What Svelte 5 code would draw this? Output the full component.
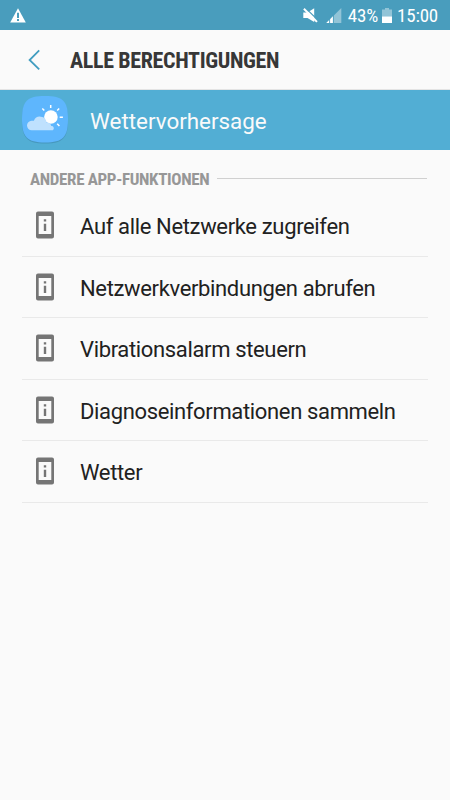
<script lang="ts">
    let appName = 'Wettervorhersage';

    let permissions = [
        'Auf alle Netzwerke zugreifen',
        'Netzwerkverbindungen abrufen',
        'Vibrationsalarm steuern',
        'Diagnoseinformationen sammeln',
        'Wetter'
    ];
</script>

<div class="screen">
    <div class="status-bar">
        <svg class="warning" width="16" height="15" viewBox="0 0 16 15">
            <path d="M8 0.3 15.8 14.6H0.2Z" fill="#fff" />
            <path d="M7 4.7h2v5.3H7zM7 11h2v2H7z" fill="#499dbd" />
        </svg>
        <div class="status-right">
            <svg class="mute" width="15" height="15" viewBox="0 0 15 15">
                <path d="M0.3 4.4h4.2L11.2 0.2v13.9L4.5 10H0.3z" fill="#fff" />
                <path d="M2.4 0 15.4 12.5" stroke="#499dbd" stroke-width="1.2" />
                <path d="M0.9 0.8 14 13.9" stroke="#fff" stroke-width="2" />
            </svg>
            <svg class="signal" width="16" height="15" viewBox="0 0 16 15">
                <path d="M15.3 0v15H0.3z" fill="#92c4d7" />
                <path d="M7 8.3V15H0.3z" fill="#fff" />
                <path d="M3.6 8v7M7.4 6v9" stroke="#499dbd" stroke-width="0.9" />
            </svg>
            <span class="status-text percent">43%</span>
            <svg class="battery" width="10" height="15" viewBox="0 0 10 15">
                <path d="M3 0h4v1.5h3v6.9H0V1.5h3z" fill="#92c4d7" />
                <path d="M0 8.4h10V15H0z" fill="#fff" />
            </svg>
            <span class="status-text clock">15:00</span>
        </div>
    </div>

    <header>
        <svg width="13" height="22" viewBox="0 0 13 22">
            <path d="M11.2 1.4 1.6 11l9.6 9.3" fill="none" stroke="#419dc0" stroke-width="1.8" />
        </svg>
        <h1>ALLE BERECHTIGUNGEN</h1>
    </header>

    <div class="app-row">
        <svg class="app-icon" width="48" height="50" viewBox="0 0 48 50">
            <path d="M24 2.2C42 2.2 47 7 47 25S42 48.6 24 48.6 1 43 1 25 6 2.2 24 2.2Z" fill="#438fb5" opacity=".7" />
            <path d="M24 1C42 1 47 6 47 24S42 47.5 24 47.5 1 42 1 24 6 1 24 1Z" fill="#5eb6fd" />
            <path d="M29.7 10v3M21.3 13.5l2 2M38.2 13.5l-2 2M38.7 22.3h3.2M36.2 28.8l2.2 2.2" stroke="#fff" stroke-width="1.5" />
            <circle cx="29.9" cy="22" r="6.8" fill="#fff" />
            <path d="M10.8 35.2a4.7 4.7 0 0 1-.2-9.400h2.300a6.600 6.600 0 0 1 12.700 1.700 4 4 0 0 1 4.600 3.500 2.300 2.300 0 0 1 1.600 4.200Z" fill="#bfe1fe" />
        </svg>
        <span>{appName}</span>
    </div>

    <div class="section-title">
        <h2>ANDERE APP-FUNKTIONEN</h2>
        <div class="rule"></div>
    </div>

    <ul>
        {#each permissions as permission}
            <li>
                <svg width="18" height="28" viewBox="0 0 18 28">
                    <path fill-rule="evenodd" d="M2 .5h14a2 2 0 0 1 2 2v23a2 2 0 0 1-2 2H2a2 2 0 0 1-2-2v-23a2 2 0 0 1 2-2ZM2.7 5v18h12.6V5Z" fill="#757575" />
                    <path d="M7.8 8.3h2.4v2.2H7.8zM7.8 12.8h2.4V20H7.8z" fill="#757575" />
                </svg>
                <span>{permission}</span>
            </li>
        {/each}
    </ul>
</div>

<style>
    :global(body) {
        background: #fafafa;
    }
    .screen {
        width: 450px;
        height: 800px;
        overflow: hidden;
        background: #fafafa;
        font-family: Roboto, sans-serif;
        color: #212121;
    }
    .status-bar {
        display: flex;
        justify-content: space-between;
        align-items: center;
        box-sizing: border-box;
        height: 30px;
        padding: 1px 12px 0 10px;
        background: #499dbd;
        color: #fff;
    }
    .status-right {
        display: flex;
        align-items: center;
    }
    .signal {
        margin-left: 8px;
    }
    .status-text {
        font-size: 19px;
        line-height: 28px;
        font-stretch: condensed;
        letter-spacing: -0.2px;
        white-space: nowrap;
    }
    .percent {
        margin: 0 4px 0 6px;
    }
    .clock {
        margin-left: 5px;
    }
    header {
        display: flex;
        align-items: center;
        box-sizing: border-box;
        height: 60px;
        padding-left: 28px;
        border-bottom: 1px solid #e4e4e4;
    }
    h1 {
        margin: 2px 0 0 29px;
        font-size: 22px;
        font-weight: 700;
        font-stretch: condensed;
        letter-spacing: -0.35px;
        white-space: nowrap;
        color: #373737;
    }
    .app-row {
        display: flex;
        align-items: center;
        height: 60px;
        padding-left: 21px;
        background: #52aed4;
        color: #fafafa;
        font-size: 22.4px;
    }
    .app-row span {
        margin: 2px 0 0 21px;
    }
    .section-title {
        display: flex;
        align-items: center;
        box-sizing: border-box;
        height: 45.4px;
        padding: 12px 23px 0 30px;
    }
    .section-title .rule {
        flex: 1;
        height: 1px;
        margin-left: 8px;
        margin-bottom: 1px;
        background: #d0d0d0;
    }
    h2 {
        margin: 0;
        font-size: 17px;
        font-weight: 700;
        font-stretch: condensed;
        letter-spacing: -0.35px;
        white-space: nowrap;
        color: #979797;
    }
    ul {
        list-style: none;
        margin: 0 22px;
        padding: 0;
    }
    li {
        display: flex;
        align-items: center;
        box-sizing: border-box;
        height: 61.5px;
        padding-left: 14px;
        border-bottom: 1px solid #e9e9e9;
        font-size: 22px;
        letter-spacing: -0.35px;
    }
    li svg {
        margin-bottom: 1px;
    }
    li span {
        margin: 2px 0 0 26px;
    }
</style>
